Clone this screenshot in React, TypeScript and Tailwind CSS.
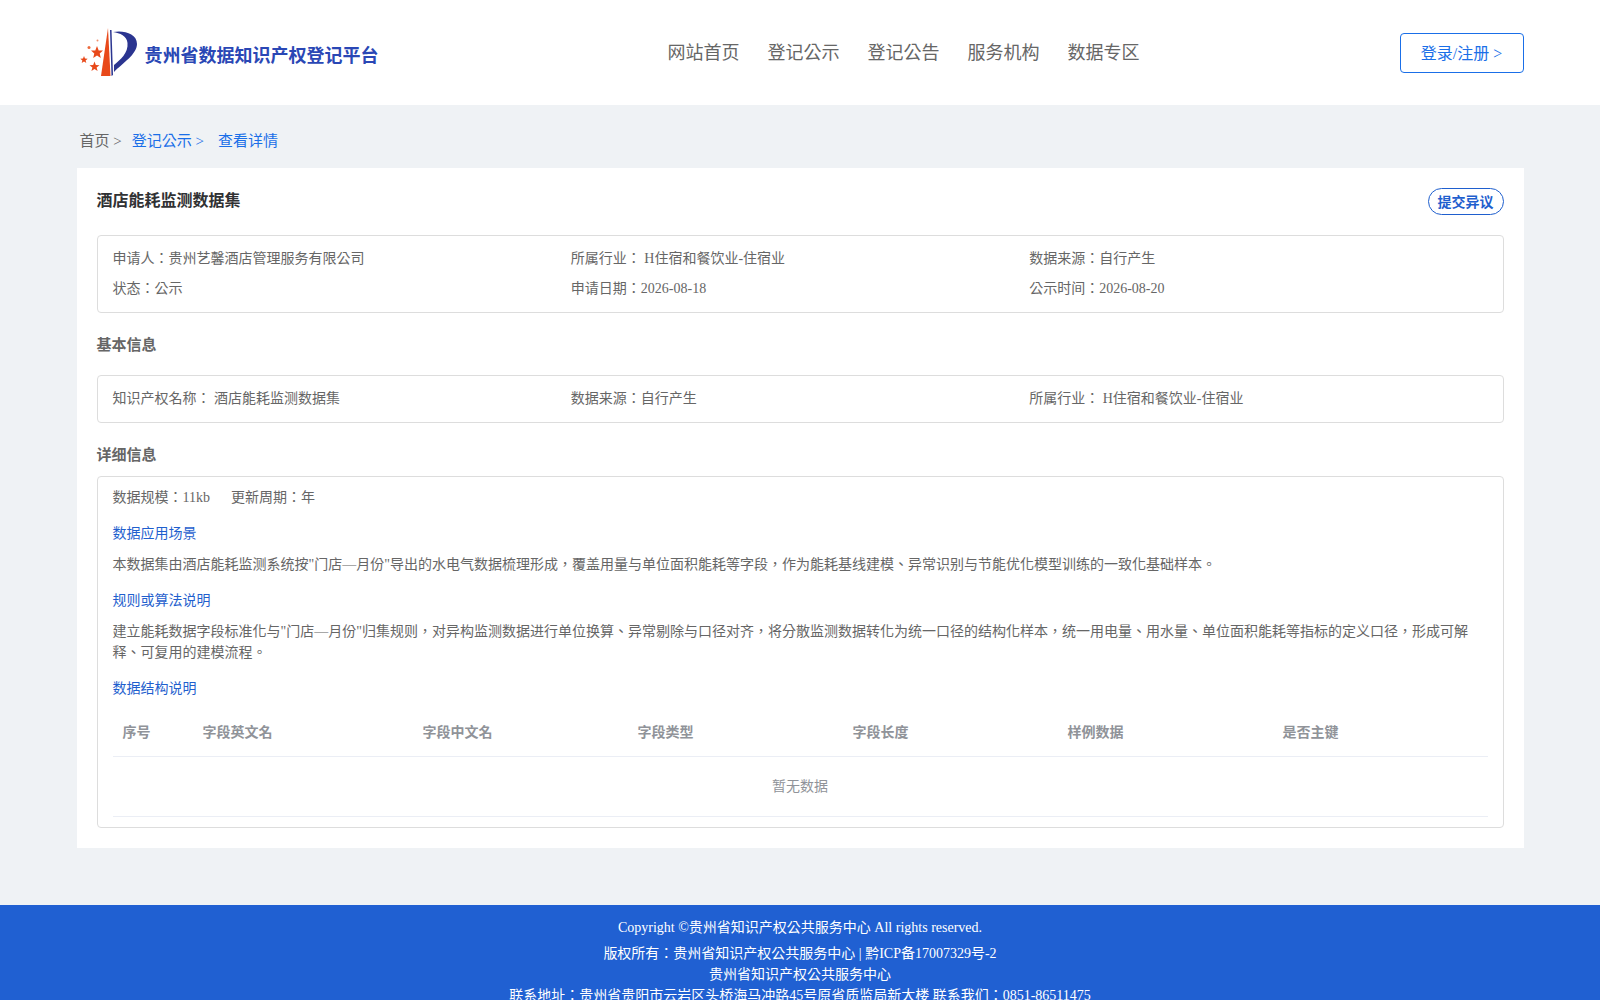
const navItems = ['网站首页', '登记公示', '登记公告', '服务机构', '数据专区'];
const tableColumns = [
  { label: '序号', width: 'w-[80px]' },
  { label: '字段英文名', width: 'w-[220px]' },
  { label: '字段中文名', width: 'w-[215px]' },
  { label: '字段类型', width: 'w-[215px]' },
  { label: '字段长度', width: 'w-[215px]' },
  { label: '样例数据', width: 'w-[215px]' },
  { label: '是否主键', width: 'w-[215px]' },
];

function Logo() {
  return (
    <svg className="w-[65px] h-[58px] shrink-0" viewBox="0 0 65 58" aria-hidden="true">
      <polygon points="33,6 26,54 35.5,54" fill="#e8491a" />
      <polygon points="35,8 36.5,8 38,53 36.5,54" fill="#2b3590" />
      <path d="M38 10 C48 8 62 11 62 22 C62 32 48 41 39 50 L39 43 C45 38 53.5 31 52.5 21 C52 14 45 11 38 10 Z" fill="#2b3590" />
      <polygon points="22,24 23.7,28.4 28,28.6 24.7,31.4 25.8,36 22,33.4 18.2,36 19.3,31.4 16,28.6 20.3,28.4" fill="#e8491a" />
      <polygon points="19.5,39.5 20.8,43 24.5,43.2 21.6,45.5 22.6,49 19.5,47 16.4,49 17.4,45.5 14.5,43.2 18.2,43" fill="#e8491a" />
      <polygon points="9,34 10,36.6 12.7,36.8 10.6,38.5 11.3,41 9,39.6 6.7,41 7.4,38.5 5.3,36.8 8,36.6" fill="#e8491a" />
      <circle cx="14" cy="25.5" r="1.5" fill="#ec6a3c" />
      <circle cx="22.5" cy="18.5" r="1" fill="#f0916f" />
    </svg>
  );
}

function Header() {
  return (
    <header className="bg-white h-[105px]">
      <div className="w-[1447px] mx-auto h-full flex items-start">
        <div className="flex items-start pt-[22px] w-[302px] -ml-[2px]">
          <Logo />
          <span className="ml-[5px] mt-[22px] text-[18px] leading-[24px] font-bold text-[#2a47b5] whitespace-nowrap">
            贵州省数据知识产权登记平台
          </span>
        </div>
        <nav className="flex gap-[28px] ml-[291px] pt-[40px] text-[18px] leading-[26px] text-[#666666]">
          {navItems.map((item) => (
            <span key={item}>{item}</span>
          ))}
        </nav>
        <button className="ml-auto mt-[33px] w-[124px] h-[40px] border border-[#1a6fe8] rounded-[4px] text-[16px] pt-[2px] text-[#1a6fe8]">
          登录/注册 &gt;
        </button>
      </div>
    </header>
  );
}

function InfoRow({ items }: { items: string[] }) {
  return (
    <div className="grid grid-cols-3">
      {items.map((text) => (
        <div key={text} className="h-[30px] leading-[30px]">
          {text}
        </div>
      ))}
    </div>
  );
}

function DetailTable() {
  return (
    <div className="mt-[10px]">
      <div className="flex h-[48px] items-center border-b border-[#ebeef5] font-bold text-[#909399]">
        {tableColumns.map((col) => (
          <div key={col.label} className={`${col.width} px-[10px]`}>
            {col.label}
          </div>
        ))}
      </div>
      <div className="h-[60px] flex items-center justify-center border-b border-[#ebeef5] text-[#909399]">
        暂无数据
      </div>
    </div>
  );
}

export default function App() {
  return (
    <div className="min-h-screen bg-[#eff2f5] text-[14px] text-[#666666] font-['Liberation_Serif','Noto_Sans_CJK_TC',serif]">
      <Header />

      <div className="w-[1447px] mx-auto">
        {/* Breadcrumb */}
        <div className="h-[63px] flex items-center pl-[3px] pt-[9px] text-[15px] text-[#666666]">
          <span>首页 &gt;</span>
          <span className="ml-[10px] text-[#1a6fe8]">登记公示 &gt;</span>
          <span className="ml-[14px] text-[#1a6fe8]">查看详情</span>
        </div>

        <main className="bg-white h-[680px] px-[20px] pt-[20px]">
          <div className="flex items-start justify-between h-[47px]">
            <h1 className="pt-[1px] text-[16px] leading-[24px] font-bold text-[#303133]">酒店能耗监测数据集</h1>
            <button className="w-[76px] h-[27px] pt-[1px] border border-[#1f5fce] rounded-[14px] font-bold text-[#1f5fce] bg-white">
              提交异议
            </button>
          </div>

          <section className="h-[78px] border border-[#dddddd] rounded-[4px] px-[15px] pt-[8px]">
            <InfoRow items={['申请人：贵州艺馨酒店管理服务有限公司', '所属行业： H住宿和餐饮业-住宿业', '数据来源：自行产生']} />
            <InfoRow items={['状态：公示', '申请日期：2026-08-18', '公示时间：2026-08-20']} />
          </section>

          <h2 className="mt-[21px] text-[15px] leading-[22px] font-bold text-[#666666]">基本信息</h2>
          <section className="mt-[19px] h-[48px] border border-[#dddddd] rounded-[4px] px-[15px] pt-[8px]">
            <InfoRow items={['知识产权名称： 酒店能耗监测数据集', '数据来源：自行产生', '所属行业： H住宿和餐饮业-住宿业']} />
          </section>

          <h2 className="mt-[21px] text-[15px] leading-[22px] font-bold text-[#666666]">详细信息</h2>
          <section className="mt-[10px] h-[352px] border border-[#dddddd] rounded-[4px] px-[15px] pt-[10px]">
            <div className="flex gap-[21px] leading-[21px]">
              <span>数据规模：11kb</span>
              <span>更新周期：年</span>
            </div>
            <h3 className="mt-[15px] leading-[21px] text-[#1f5fce]">数据应用场景</h3>
            <p className="mt-[10px] leading-[21px]">
              本数据集由酒店能耗监测系统按"门店—月份"导出的水电气数据梳理形成，覆盖用量与单位面积能耗等字段，作为能耗基线建模、异常识别与节能优化模型训练的一致化基础样本。
            </p>
            <h3 className="mt-[15px] leading-[21px] text-[#1f5fce]">规则或算法说明</h3>
            <p className="mt-[10px] leading-[21px]">
              建立能耗数据字段标准化与"门店—月份"归集规则，对异构监测数据进行单位换算、异常剔除与口径对齐，将分散监测数据转化为统一口径的结构化样本，统一用电量、用水量、单位面积能耗等指标的定义口径，形成可解释、可复用的建模流程。
            </p>
            <h3 className="mt-[15px] leading-[21px] text-[#1f5fce]">数据结构说明</h3>
            <DetailTable />
          </section>
        </main>
      </div>

      <footer className="mt-[57px] bg-[#2060d2] text-white text-center pt-[12px] pb-[20px] leading-[21px]">
        <div className="mb-[5px]">Copyright ©贵州省知识产权公共服务中心 All rights reserved.</div>
        <div>版权所有：贵州省知识产权公共服务中心 | 黔ICP备17007329号-2</div>
        <div>贵州省知识产权公共服务中心</div>
        <div>联系地址：贵州省贵阳市云岩区头桥海马冲路45号原省质监局新大楼 联系我们：0851-86511475</div>
      </footer>
    </div>
  );
}
